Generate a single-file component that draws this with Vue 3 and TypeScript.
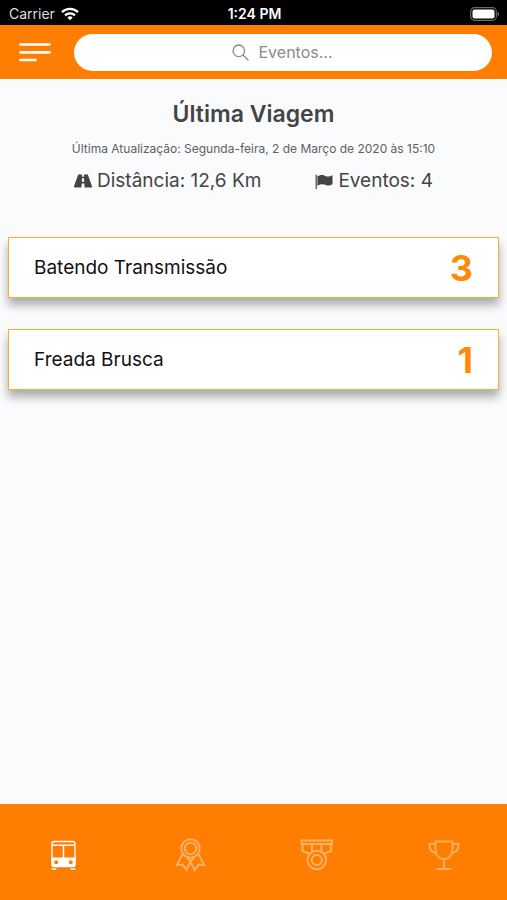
<script setup lang="ts">
import { ref } from 'vue'

interface TripEvent {
  name: string
  count: number
}

interface Tab {
  id: string
  label: string
}

const search = ref('')
const activeTab = ref('trip')

const events: TripEvent[] = [
  { name: 'Batendo Transmissão', count: 3 },
  { name: 'Freada Brusca', count: 1 },
]

const tabs: Tab[] = [
  { id: 'trip', label: 'Viagem' },
  { id: 'ribbon', label: 'Prêmios' },
  { id: 'medal', label: 'Medalhas' },
  { id: 'trophy', label: 'Troféus' },
]
</script>

<template>
  <div class="screen">
    <div class="status">
      <div class="carrier">
        <span>Carrier</span>
        <svg width="18" height="14" viewBox="0 0 18 14" fill="none" stroke="#fff" stroke-width="2.3" aria-hidden="true">
          <path d="M1 5.1a11.6 11.6 0 0 1 16 0" />
          <path d="M4 8.3a7.2 7.2 0 0 1 10 0" />
          <path d="M9 13.2 6.3 10.5a3.8 3.8 0 0 1 5.4 0Z" fill="#fff" stroke="none" />
        </svg>
      </div>
      <span class="time">1:24 PM</span>
      <div class="battery">
        <svg width="30" height="14" viewBox="0 0 30 14" aria-hidden="true">
          <rect x="0.7" y="0.7" width="25.6" height="12.6" rx="3.8" fill="none" stroke="#6a6a6a" stroke-width="1.2" />
          <rect x="2.5" y="2.5" width="22" height="9" rx="2" fill="#fff" />
          <path d="M27.6 4.8c2 .8 2 3.6 0 4.4Z" fill="#777" />
        </svg>
      </div>
    </div>

    <header class="header">
      <button class="menu" type="button" aria-label="Menu">
        <svg width="32" height="20" viewBox="0 0 32 20" stroke="#fff" stroke-width="2.7" stroke-linecap="round" aria-hidden="true">
          <path d="M1.5 2.5h29M1.5 10.3h29M1.5 18h15" />
        </svg>
      </button>
      <label class="search">
        <svg width="17" height="17" viewBox="0 0 17 17" fill="none" stroke="#8a8a8a" stroke-width="1.3" stroke-linecap="round" aria-hidden="true">
          <circle cx="6.8" cy="6.8" r="5.8" />
          <path d="m11 11 5 5" />
        </svg>
        <input v-model="search" type="text" placeholder="Eventos..." aria-label="Eventos" />
      </label>
    </header>

    <main class="content">
      <h1>Última Viagem</h1>
      <p class="updated">Última Atualização: Segunda-feira, 2 de Março de 2020 às 15:10</p>
      <div class="stats">
        <span class="stat">
          <svg width="18" height="14" viewBox="0 0 18 14" fill="#444" aria-hidden="true">
            <path
              d="M4.2.5h3.9L8 2.8h2L9.9.5h3.9L18 12.3q.2 1.2-1 1.2h-6.4L10.3 9.6H7.7L7.4 13.5H1Q-.2 13.5 0 12.3ZM8 4.3 7.8 7.8h2.4L10 4.3Z"
              fill-rule="evenodd"
            />
          </svg>
          Distância: 12,6 Km
        </span>
        <span class="stat">
          <svg width="18" height="15" viewBox="0 0 18 15" fill="#444" aria-hidden="true">
            <path d="M.6.8Q1.2.2 1.8.8V15H.6Z" />
            <path d="M2.4 2.6C6.5.2 8.5 1.2 10.5 2.1S14.5 2.7 17.5 1.3V10.2C14.2 12 12.2 11.7 10.2 10.8S6.2 9.8 2.4 11.7Z" />
          </svg>
          Eventos: 4
        </span>
      </div>

      <ul class="events">
        <li v-for="event in events" :key="event.name" class="event">
          <span>{{ event.name }}</span>
          <strong>{{ event.count }}</strong>
        </li>
      </ul>
    </main>

    <nav class="tabs">
      <button
        v-for="tab in tabs"
        :key="tab.id"
        type="button"
        class="tab"
        :class="{ active: tab.id === activeTab }"
        :aria-label="tab.label"
        @click="activeTab = tab.id"
      >
        <svg width="36" height="36" viewBox="0 0 36 36" fill="none" stroke="currentColor" stroke-width="2" aria-hidden="true">
          <template v-if="tab.id === 'trip'">
            <rect x="7" y="4.5" width="23" height="25" rx="2.5" stroke-width="1.4" />
            <path d="M7 8.3h23M18.5 8.3V21" stroke-width="1.4" />
            <path
              d="M6.5 20.5h24V28q0 2-2 2h-20q-2 0-2-2ZM11.2 23.2a2 2 0 1 0 .01 0ZM25.8 23.2a2 2 0 1 0 .01 0Z"
              fill="currentColor"
              fill-rule="evenodd"
              stroke="none"
            />
            <path d="M6.7 32h4.6M25.7 32h4.6" stroke-width="1.6" />
          </template>
          <template v-else-if="tab.id === 'ribbon'">
            <circle cx="18.5" cy="11.5" r="9.2" />
            <circle cx="18.5" cy="11.5" r="5.8" />
            <path d="M10.3 17.5 4.8 28.3l5.9-.7 3.7 5.5 4.1-8.3 4.1 8.3 3.7-5.5 5.9.7-5.5-10.8M14.5 20l4 4.8 4-4.8" />
          </template>
          <template v-else-if="tab.id === 'medal'">
            <path d="M2.5 3.5H33v3.4H2.5ZM3.5 7v7l7.5 3M32 7v7l-7.5 3M13 7v8.5M22.5 7v8.5" />
            <circle cx="17.8" cy="23" r="9.3" />
            <circle cx="17.8" cy="23" r="5" />
          </template>
          <template v-else>
            <path d="M9.5 4.5h17V13c0 5.500-3.600 9.200-8.500 9.200S9.500 18.500 9.500 13ZM18 22.200V32M10.500 32h15" stroke-width="1.800" />
            <path d="M9.500 6.800H3.300c0 5.500 2.500 8.800 6.900 9.400M26.500 6.800h6.200c0 5.500-2.500 8.800-6.900 9.400" stroke-width="1.800" />
          </template>
        </svg>
      </button>
    </nav>
  </div>
</template>

<style>
body {
  background: #fafbfd;
}
</style>

<style scoped>
.screen {
  display: flex;
  flex-direction: column;
  min-height: 100vh;
  font-family: Inter, 'Liberation Sans', sans-serif;
  color: #444;
}

.status {
  display: grid;
  grid-template-columns: 1fr auto 1fr;
  align-items: center;
  height: 25px;
  padding: 2px 7px 0 9px;
  box-sizing: border-box;
  background: #000;
  color: #ddd;
  font-size: 14px;
}

.carrier {
  display: flex;
  align-items: center;
  gap: 6px;
}

.time {
  color: #fff;
  font-weight: 600;
}

.battery {
  display: flex;
  justify-content: flex-end;
}

.header {
  display: flex;
  align-items: center;
  gap: 23px;
  height: 54px;
  padding: 0 15px 0 19px;
  box-sizing: border-box;
  background: #ff7d00;
}

.menu {
  display: flex;
  padding: 0;
  border: 0;
  background: none;
}

.search {
  display: flex;
  flex: 1;
  align-items: center;
  justify-content: center;
  gap: 10px;
  height: 37px;
  border-radius: 19px;
  background: #fff;
}

.search input {
  width: 76px;
  padding: 0;
  border: 0;
  outline: 0;
  background: none;
  color: #444;
  font: inherit;
  font-size: 16px;
}

.search input::placeholder {
  color: #8a8a8a;
  opacity: 1;
}

.content {
  flex: 1;
  padding: 21px 8px 20px;
}

h1 {
  margin: 0;
  font-size: 23px;
  font-weight: 600;
  line-height: 28px;
  text-align: center;
}

.updated {
  margin: 13px 0 0;
  color: #606060;
  font-size: 12px;
  line-height: 16px;
  text-align: center;
}

.stats {
  display: flex;
  justify-content: center;
  gap: 54px;
  margin-top: 12px;
  font-size: 19px;
  line-height: 24px;
}

.stat {
  display: flex;
  align-items: center;
  gap: 5px;
}

.events {
  display: flex;
  flex-direction: column;
  gap: 31px;
  margin: 44px 0 0;
  padding: 0;
  list-style: none;
}

.event {
  display: flex;
  align-items: center;
  justify-content: space-between;
  height: 61px;
  padding: 0 25px;
  border: 1px solid #ffae2b;
  box-sizing: border-box;
  background: #fff;
  box-shadow: 0 7px 9px rgba(0, 0, 0, 0.32);
  color: #111;
  font-size: 19px;
}

.event strong {
  color: #ff8a0a;
  font-size: 36px;
  font-weight: 700;
}

.tabs {
  display: grid;
  grid-template-columns: repeat(4, 1fr);
  height: 96px;
  background: #ff7d00;
}

.tab {
  display: flex;
  align-items: center;
  justify-content: center;
  padding: 6px 0 0;
  border: 0;
  background: none;
  color: #ffb266;
}

.tab.active {
  color: #fff;
}
</style>
